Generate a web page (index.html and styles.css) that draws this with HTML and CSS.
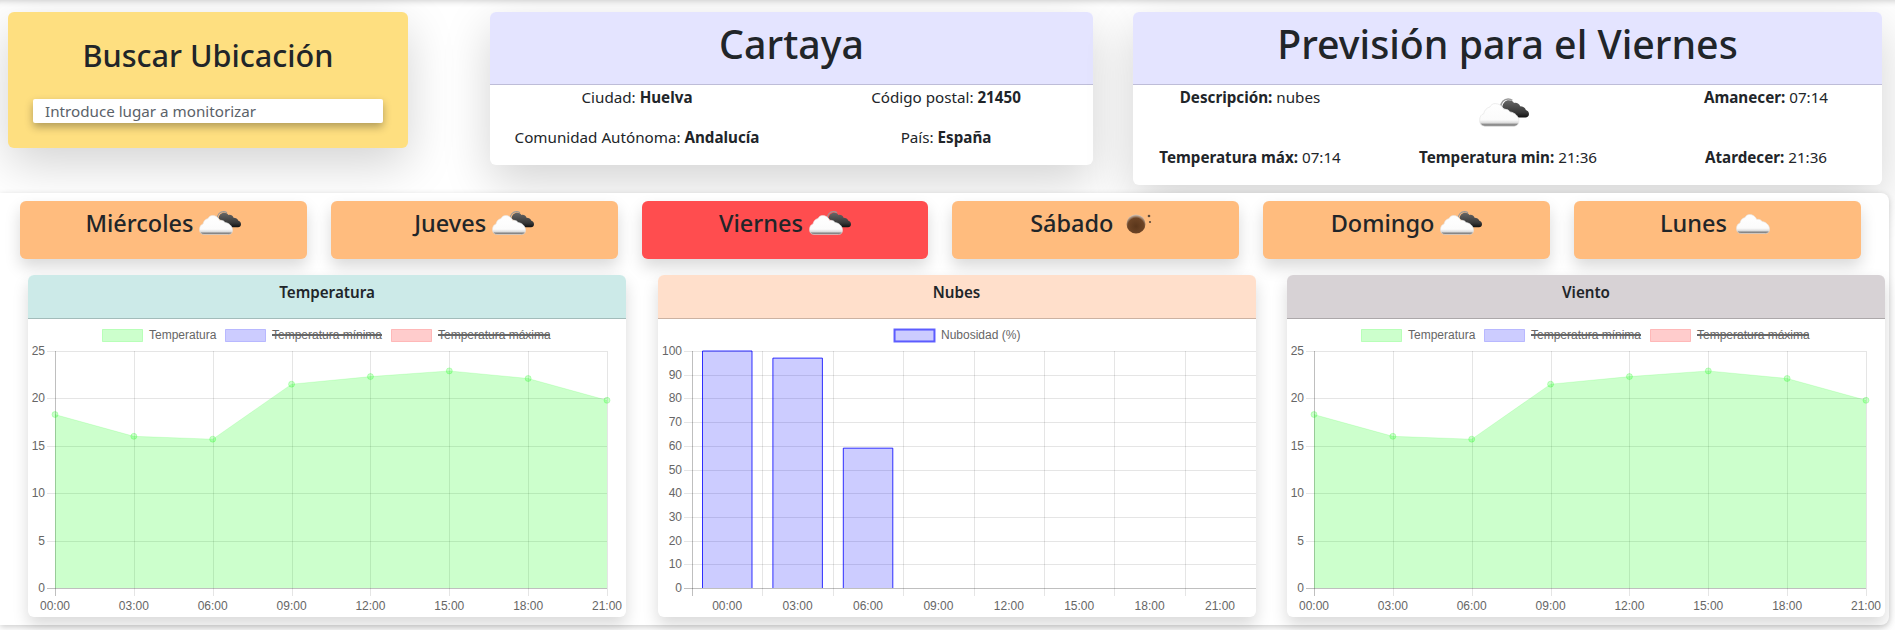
FILE: index.html
```html
<!DOCTYPE html>
<html lang="es">
<head>
  <meta charset="utf-8">
  <title>Previsión del tiempo</title>
  <link rel="stylesheet" href="styles.css">
</head>
<body>
  <svg class="defs" width="0" height="0">
    <defs>
      <linearGradient id="cloudWhite" x1="0" y1="0" x2="0" y2="1">
        <stop offset="0" stop-color="#ffffff"/>
        <stop offset="0.72" stop-color="#fbfbfb"/>
        <stop offset="0.85" stop-color="#dcdcdc"/>
        <stop offset="0.92" stop-color="#8f8f8f"/>
        <stop offset="1" stop-color="#757575"/>
      </linearGradient>
      <linearGradient id="cloudDark" x1="0" y1="0" x2="0" y2="1">
        <stop offset="0" stop-color="#666666"/>
        <stop offset="0.7" stop-color="#383838"/>
        <stop offset="1" stop-color="#111111"/>
      </linearGradient>
      <radialGradient id="ball" cx="0.5" cy="0.62" r="0.6">
        <stop offset="0" stop-color="#5a361b"/>
        <stop offset="0.72" stop-color="#6e4526"/>
        <stop offset="1" stop-color="#d4c4b6"/>
      </radialGradient>
      <symbol id="whiteCloud" viewBox="-0.500 -0.500 34 20" overflow="visible">
        <path fill="url(#cloudWhite)" stroke="#e6e6e6" stroke-width="0.600" d="M4.500 19C1.700 19 0 17 0 14C0 11 1.500 9 3.500 8.500C4 5.500 6 3.500 8.500 3C9.500 1.200 11 0 13 0C16.500 0 19 2 20.300 5C21.800 4.500 24.500 5 25.500 7C29.500 7.500 33 10.500 33 14.500C33 17.500 31.500 19 29 19Z"/>
      </symbol>
      <symbol id="brokenClouds" viewBox="0 0 42 24">
        <path fill="none" stroke="#9a9a9a" stroke-width="1.200" d="M18 8C18.300 3.500 21 .6 24.500 .6C25.800 .6 27 1 28 1.800"/>
        <path fill="url(#cloudDark)" d="M19.500 8C19.800 4 22.300 1.800 25 1.800C27 1.800 28.600 2.600 29.400 4C31.500 3.400 33.800 4.400 34.600 6.800C36.800 6.800 38.700 8 39.400 9.800C41 10.300 42 11.700 42 13.200C42 15 40.700 16.200 39 16.200L28 16.200L22 9Z"/>
        <use href="#whiteCloud" x="0" y="4" width="34" height="20"/>
      </symbol>
      <symbol id="singleCloud" viewBox="0 0 42 24">
        <use href="#whiteCloud" x="3" y="3" width="34" height="20"/>
      </symbol>
      <symbol id="darkBall" viewBox="0 0 42 24">
        <circle cx="17" cy="13" r="9.500" fill="url(#ball)"/>
        <circle cx="30" cy="5" r="1.300" fill="#5c4a3a"/>
        <circle cx="31" cy="11" r="1.100" fill="#5c4a3a"/>
      </symbol>
    </defs>
  </svg>

  <div class="top-row">
    <div class="card search-card">
      <h2>Buscar Ubicación</h2>
      <input class="search-input" type="text" placeholder="Introduce lugar a monitorizar">
    </div>

    <div class="card place-card">
      <div class="card-title-bar"><h1>Cartaya</h1></div>
      <div class="place-grid">
        <div>Ciudad: <b>Huelva</b></div>
        <div>Código postal: <b>21450</b></div>
        <div>Comunidad Autónoma: <b>Andalucía</b></div>
        <div>País: <b>España</b></div>
      </div>
    </div>

    <div class="card forecast-card">
      <div class="card-title-bar"><h1>Previsión para el Viernes</h1></div>
      <div class="forecast-grid">
        <div><b>Descripción:</b> nubes</div>
        <div class="forecast-icon"><svg class="icon-big"><use href="#brokenClouds"/></svg></div>
        <div><b>Amanecer:</b> 07:14</div>
        <div class="row-two"><b>Temperatura máx:</b> 07:14</div>
        <div class="row-two"><b>Temperatura min:</b> 21:36</div>
        <div class="row-two"><b>Atardecer:</b> 21:36</div>
      </div>
    </div>
  </div>

  <div class="main-panel">
    <div class="days">
      <div class="day">Miércoles <svg class="icon"><use href="#brokenClouds"/></svg></div>
      <div class="day">Jueves <svg class="icon"><use href="#brokenClouds"/></svg></div>
      <div class="day selected">Viernes <svg class="icon"><use href="#brokenClouds"/></svg></div>
      <div class="day">Sábado <svg class="icon"><use href="#darkBall"/></svg></div>
      <div class="day">Domingo <svg class="icon"><use href="#brokenClouds"/></svg></div>
      <div class="day">Lunes <svg class="icon"><use href="#singleCloud"/></svg></div>
    </div>

    <div class="charts">
      <div class="chart-card">
        <div class="chart-head head-temp">Temperatura</div>
        <svg id="chartTemp" class="chart" width="598" height="298"></svg>
      </div>
      <div class="chart-card">
        <div class="chart-head head-clouds">Nubes</div>
        <svg id="chartClouds" class="chart" width="598" height="298"></svg>
      </div>
      <div class="chart-card">
        <div class="chart-head head-wind">Viento</div>
        <svg id="chartWind" class="chart" width="598" height="298"></svg>
      </div>
    </div>
  </div>

  <script src="charts.js"></script>
</body>
</html>
```
FILE: styles.css
```css
html, body {
  margin: 0;
  height: 100%;
  overflow: hidden;
}
body {
  background: #fff;
  color: #212529;
  font-family: "Noto Sans", "Open Sans", sans-serif;
  font-size: 15.2px;
  line-height: 24px;
}
b {
  font-weight: 700;
}
.defs {
  position: absolute;
}

/* top row */
.top-row {
  display: flex;
  align-items: flex-start;
  height: 193px;
  padding: 12px 0 0 8px;
  box-sizing: border-box;
  box-shadow: inset 0 7px 6px -6px rgba(0,0,0,.2);
}
.card {
  background: #fff;
  border-radius: 6px;
  box-shadow: 0 16px 48px rgba(0,0,0,.175);
  overflow: hidden;
}
.search-card {
  width: 400px;
  height: 136px;
  background: #fedf80;
  padding: 24px 25px 0;
  box-sizing: border-box;
}
.search-card h2 {
  margin: 0 0 25px;
  font-size: 30.6px;
  font-weight: 500;
  line-height: 38px;
  text-align: center;
}
.search-input {
  display: block;
  width: 350px;
  height: 24px;
  padding: 0 12px;
  box-sizing: border-box;
  border: 0;
  border-radius: 2px;
  background: #fff;
  box-shadow: 0 4px 8px rgba(0,0,0,.3);
  font-family: inherit;
  font-size: 15.2px;
}
.search-input::placeholder {
  color: #5b6269;
  opacity: 1;
}
.place-card {
  width: 603px;
  height: 153px;
  margin-left: 82px;
}
.forecast-card {
  width: 749px;
  height: 173px;
  margin-left: 40px;
}
.card-title-bar {
  height: 73px;
  box-sizing: border-box;
  background: #e4e4ff;
  border-bottom: 1px solid #bebdd8;
}
.card-title-bar h1 {
  margin: 0;
  font-size: 39.3px;
  font-weight: 500;
  line-height: 64px;
  text-align: center;
}
.place-grid {
  display: grid;
  grid-template-columns: 1fr 1fr;
  grid-auto-rows: 40px;
  column-gap: 29px;
  padding: 0 7px;
  text-align: center;
}
.forecast-grid {
  display: grid;
  grid-template-columns: repeat(3, 234px);
  grid-template-rows: 60px 24px;
  column-gap: 24px;
  text-align: center;
}
.forecast-icon {
  height: 60px;
}
.icon-big {
  display: block;
  width: 50px;
  height: 29px;
  margin: 13px 0 0 88px;
}

/* days + charts */
.main-panel {
  position: relative;
  width: 1889px;
  height: 432px;
  background: #fff;
  border-radius: 0 8px 8px 0;
  box-shadow: 0 2px 6px rgba(0,0,0,.2);
}
.days {
  display: flex;
  gap: 24px;
  padding: 8px 0 0 20px;
}
.day {
  display: flex;
  align-items: center;
  justify-content: center;
  gap: 6px;
  width: 286.8px;
  height: 58px;
  padding-bottom: 14px;
  box-sizing: border-box;
  background: #ffbc7e;
  border-radius: 6px;
  box-shadow: 0 8px 16px rgba(0,0,0,.15);
  font-size: 23.5px;
  font-weight: 500;
}
.day.selected {
  background: #ff4d4f;
}
.icon {
  width: 42px;
  height: 24px;
  flex: none;
}
.charts {
  display: flex;
  gap: 31.5px;
  padding: 16px 0 0 28px;
}
.chart-card {
  width: 598px;
  height: 342px;
  background: #fff;
  border-radius: 6px;
  box-shadow: 0 8px 16px rgba(0,0,0,.15);
  overflow: hidden;
}
.chart-head {
  height: 44px;
  padding-top: 5px;
  box-sizing: border-box;
  border-bottom: 1px solid;
  font-size: 15.2px;
  font-weight: 600;
  text-align: center;
}
.head-temp {
  background: #cceae8;
  border-color: #a2bcba;
}
.head-clouds {
  background: #ffdfcb;
  border-color: #ccb2a2;
}
.head-wind {
  background: #d7d2d5;
  border-color: #aca8aa;
}
.chart {
  display: block;
}
.chart text {
  font-family: "Liberation Sans", Arial, sans-serif;
  font-size: 12px;
  fill: #666;
}
```
FILE: charts.js
```js
// small chart helper, draws the same look as the charts on the original page
var NS = 'http://www.w3.org/2000/svg';
var HOURS = ['00:00', '03:00', '06:00', '09:00', '12:00', '15:00', '18:00', '21:00'];
var TEMPS = [18.3, 16, 15.7, 21.5, 22.3, 22.9, 22.1, 19.8];
var CLOUDS = [100, 97, 59];
var TOP = 32, BOTTOM = 269;

function add(svg, tag, attrs, text) {
  var el = document.createElementNS(NS, tag);
  for (var k in attrs) el.setAttribute(k, attrs[k]);
  if (text !== undefined) el.textContent = text;
  svg.appendChild(el);
  return el;
}

function grid(svg, left, right, xs, yTicks, maxVal, labelX) {
  for (var i = 0; i < yTicks.length; i++) {
    var y = Math.round(BOTTOM - yTicks[i] / maxVal * (BOTTOM - TOP)) + 0.5;
    add(svg, 'line', { x1: left - 8, x2: right, y1: y, y2: y, stroke: yTicks[i] == 0 ? 'rgba(0,0,0,.25)' : 'rgba(0,0,0,.1)' });
    add(svg, 'text', { x: labelX, y: y + 3, 'text-anchor': 'end' }, yTicks[i]);
  }
  for (var j = 0; j < xs.length; j++) {
    var x = Math.round(xs[j]) + 0.5;
    add(svg, 'line', { x1: x, x2: x, y1: TOP, y2: BOTTOM + 8, stroke: j == 0 ? 'rgba(0,0,0,.25)' : 'rgba(0,0,0,.1)' });
  }
}

function legendItem(svg, x, w, fill, stroke, label, off, strokeWidth) {
  add(svg, 'rect', { x: x + 0.5, y: 10.5, width: 40, height: 12, fill: fill, stroke: stroke, 'stroke-width': strokeWidth || 1 });
  add(svg, 'text', { x: x + 47, y: 20 }, label);
  if (off) add(svg, 'line', { x1: x + 47, x2: x + 47 + w, y1: 16, y2: 16, stroke: '#666', 'stroke-width': 2 });
}

function lineChart(id) {
  var svg = document.getElementById(id);
  var left = 27, right = 579, step = (right - left) / 7;
  var xs = HOURS.map(function (h, i) { return left + i * step; });

  legendItem(svg, 74, 0, 'rgba(0,255,0,.2)', 'rgba(0,255,0,.2)', 'Temperatura');
  legendItem(svg, 197, 110, 'rgba(0,0,255,.2)', 'rgba(0,0,255,.2)', 'Temperatura mínima', true);
  legendItem(svg, 363, 112, 'rgba(255,0,0,.2)', 'rgba(255,0,0,.2)', 'Temperatura máxima', true);

  grid(svg, left, right, xs, [25, 20, 15, 10, 5, 0], 25, 17);

  var pts = TEMPS.map(function (t, i) { return [xs[i], BOTTOM - t / 25 * (BOTTOM - TOP)]; });
  var d = 'M' + left + ' ' + BOTTOM + pts.map(function (p) { return 'L' + p[0] + ' ' + p[1]; }).join('') + 'L' + right + ' ' + BOTTOM + 'Z';
  add(svg, 'path', { d: d, fill: 'rgba(0,255,0,.2)' });
  add(svg, 'polyline', { points: pts.join(' '), fill: 'none', stroke: 'rgba(0,255,0,.12)', 'stroke-width': 1 });
  pts.forEach(function (p) {
    add(svg, 'circle', { cx: p[0], cy: p[1], r: 3, fill: 'rgba(0,255,0,.2)', stroke: 'rgba(0,255,0,.2)' });
  });
  xs.forEach(function (x, i) {
    add(svg, 'text', { x: x, y: 291, 'text-anchor': 'middle' }, HOURS[i]);
  });
}

function barChart(id) {
  var svg = document.getElementById(id);
  var left = 34, step = 70.4;
  var xs = [];
  for (var i = 0; i < 9; i++) xs.push(left + i * step);

  legendItem(svg, 236, 0, 'rgba(0,0,255,.2)', 'rgba(0,0,255,.6)', 'Nubosidad (%)', false, 2);
  grid(svg, left, 598, xs.slice(0, 8), [100, 90, 80, 70, 60, 50, 40, 30, 20, 10, 0], 100, 24);

  CLOUDS.forEach(function (c, i) {
    var x = left + i * step + 10.5, top = BOTTOM - c / 100 * (BOTTOM - TOP);
    add(svg, 'rect', { x: x, y: top, width: 49.5, height: BOTTOM - top, fill: 'rgba(0,0,255,.2)' });
    add(svg, 'path', { d: 'M' + x + ' ' + BOTTOM + 'V' + top + 'H' + (x + 49.5) + 'V' + BOTTOM, fill: 'none', stroke: '#00f', 'stroke-opacity': 0.8 });
  });
  HOURS.forEach(function (h, i) {
    add(svg, 'text', { x: left + i * step + step / 2, y: 291, 'text-anchor': 'middle' }, h);
  });
}

lineChart('chartTemp');
barChart('chartClouds');
lineChart('chartWind');
```
